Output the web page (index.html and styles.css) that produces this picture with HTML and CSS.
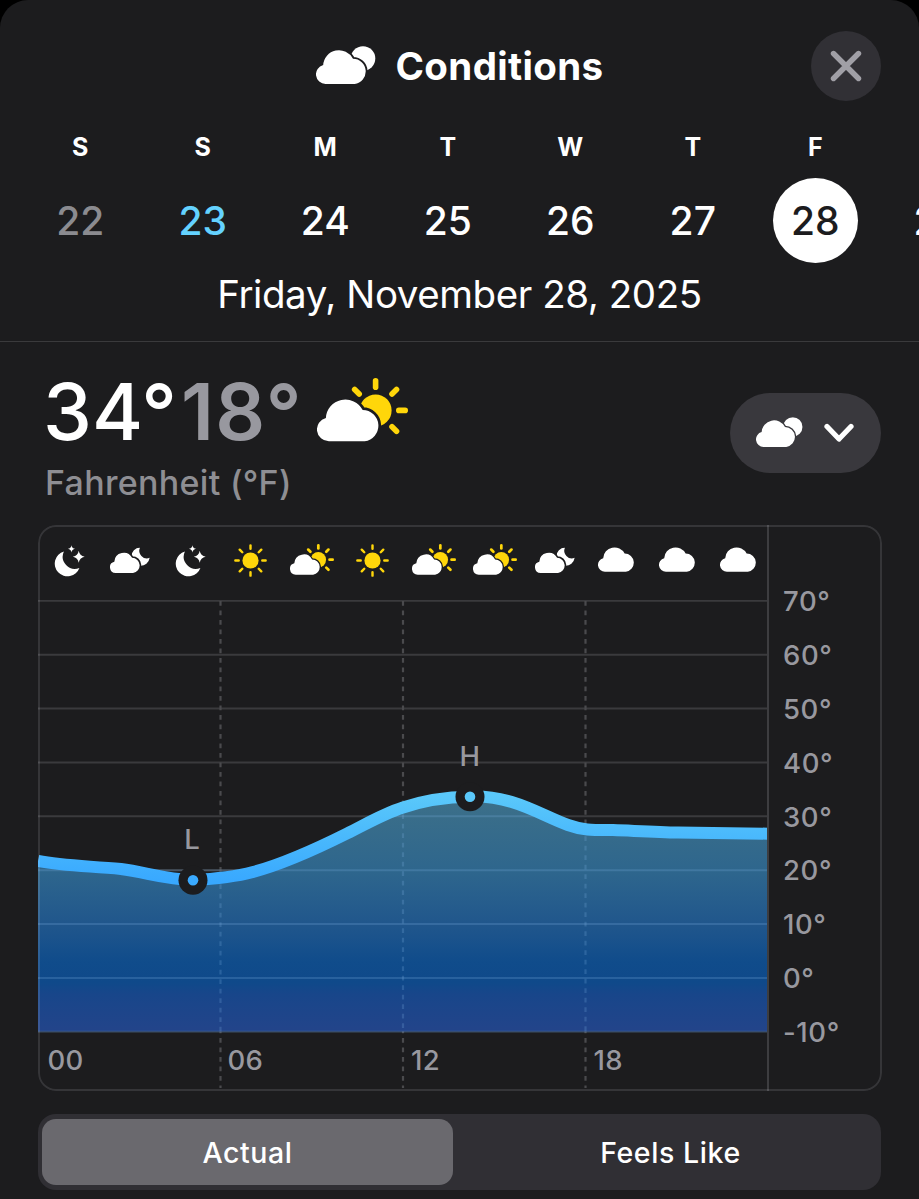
FILE: index.html
```html
<!DOCTYPE html>
<html lang="en">
<head>
  <meta charset="UTF-8">
  <meta name="viewport" content="width=device-width, initial-scale=1.0">
  <title>Conditions</title>
  <link rel="stylesheet" href="styles.css">
</head>
<body>
  <!-- Icon set -->
  <svg class="icon-defs" width="0" height="0" aria-hidden="true">
    <defs>
      <path id="cloud-shape" d="M9.6 34 A9.6 9.6 0 0 1 7.2 15.1 A15.8 15.8 0 0 1 37 8.7 A12.7 12.7 0 0 1 38.6 34 Z"/>
      <mask id="cut-overcast" maskUnits="userSpaceOnUse" x="0" y="0" width="60" height="38">
        <rect width="60" height="38" fill="#fff"/>
        <use href="#cloud-shape" y="4" fill="#000" stroke="#000" stroke-width="3.6"/>
      </mask>
      <mask id="cut-sun" maskUnits="userSpaceOnUse" x="0" y="0" width="92" height="64">
        <rect width="92" height="64" fill="#fff"/>
        <use href="#cloud-shape" transform="translate(0 21.3) scale(1.235)" fill="#000" stroke="#000" stroke-width="4.4"/>
      </mask>
      <mask id="cut-moon" maskUnits="userSpaceOnUse" x="0" y="0" width="121" height="80">
        <rect width="121" height="80" fill="#fff"/>
        <use href="#cloud-shape" transform="translate(0 15.5) scale(1.8)" fill="#000" stroke="#000" stroke-width="4.6"/>
      </mask>
      <path id="ray" d="M0 -23.2V-29.6" stroke="#ffd60a" stroke-width="5.6" stroke-linecap="round"/>
    </defs>
    <symbol id="overcast" viewBox="0 0 60 38">
      <circle cx="47" cy="12.5" r="12.3" fill="#fff" mask="url(#cut-overcast)"/>
      <use href="#cloud-shape" y="4" fill="#fff"/>
    </symbol>
    <symbol id="cloud" viewBox="0 0 51.4 34">
      <use href="#cloud-shape" fill="#fff"/>
    </symbol>
    <symbol id="partly" viewBox="0 0 91 64">
      <g mask="url(#cut-sun)">
        <circle cx="58.6" cy="32.4" r="16" fill="#ffd60a"/>
      </g>
      <g transform="translate(58.6 32.4)">
        <use href="#ray" transform="rotate(-45)"/>
        <use href="#ray"/>
        <use href="#ray" transform="rotate(45)"/>
        <use href="#ray" transform="rotate(90)"/>
        <use href="#ray" transform="rotate(135)"/>
      </g>
      <use href="#cloud-shape" transform="translate(0 21.3) scale(1.235)" fill="#fff"/>
    </symbol>
    <symbol id="sun" viewBox="-49 -49 98 98">
      <circle r="24" fill="#ffd60a"/>
      <path d="M0 -35V-45M0 35V45M-35 0H-45M35 0H45M-24.5 -24.5L-32 -32M24.5 -24.5L32 -32M-24.5 24.5L-32 32M24.5 24.5L32 32" stroke="#ffd60a" stroke-width="7.2" stroke-linecap="round"/>
    </symbol>
    <symbol id="moon" viewBox="73 88 94 96">
      <path d="M103 107 A38.5 38.5 0 1 0 150 157 A37 37 0 0 1 103 107 Z" fill="#fff"/>
      <path d="M126 88 Q127.5 97.5 137 99 Q127.5 100.5 126 110 Q124.5 100.5 115 99 Q124.5 97.5 126 88Z" fill="#fff"/>
      <path d="M148 105 Q150.5 120.5 166 123 Q150.5 125.5 148 141 Q145.5 125.5 130 123 Q145.5 120.5 148 105Z" fill="#fff"/>
    </symbol>
    <symbol id="cloud-moon" viewBox="0 0 120 80">
      <path d="M90 1 A27.5 27.5 0 1 0 119 32 A23 23 0 0 1 90 1 Z" fill="#fff" mask="url(#cut-moon)"/>
      <use href="#cloud-shape" transform="translate(0 16.5) scale(1.79)" fill="#fff"/>
    </symbol>
  </svg>

  <div class="sheet">
    <header class="header">
      <svg class="header-icon"><use href="#overcast"/></svg>
      <h1>Conditions</h1>
      <button class="close" type="button" aria-label="Close">
        <svg viewBox="0 0 32 32"><path d="M3.5 3.5L28.5 28.5M28.5 3.5L3.5 28.5"/></svg>
      </button>
    </header>

    <!-- Day picker -->
    <div class="days">
      <div class="day past"><span>S</span><b>22</b></div>
      <div class="day today"><span>S</span><b>23</b></div>
      <div class="day"><span>M</span><b>24</b></div>
      <div class="day"><span>T</span><b>25</b></div>
      <div class="day"><span>W</span><b>26</b></div>
      <div class="day"><span>T</span><b>27</b></div>
      <div class="day selected"><span>F</span><b>28</b></div>
      <div class="day"><span></span><b>29</b></div>
    </div>
    <p class="date">Friday, November 28, 2025</p>

    <!-- Summary -->
    <section class="summary">
      <div>
        <div class="temps">
          <span class="high">34°</span><span class="low">18°</span>
          <svg class="temps-icon"><use href="#partly"/></svg>
        </div>
        <p class="unit">Fahrenheit (°F)</p>
      </div>
      <button class="picker" type="button" aria-label="Choose condition">
        <svg class="picker-icon"><use href="#overcast"/></svg>
        <svg class="chevron" viewBox="0 0 30 20"><path d="M3 3.5L15 16L27 3.5"/></svg>
      </button>
    </section>

    <!-- Hourly chart -->
    <section class="chart">
      <div class="plot">
        <div class="hours">
          <svg class="i-moon"><use href="#moon"/></svg>
          <svg class="i-cloud-moon"><use href="#cloud-moon"/></svg>
          <svg class="i-moon"><use href="#moon"/></svg>
          <svg class="i-sun"><use href="#sun"/></svg>
          <svg class="i-partly"><use href="#partly"/></svg>
          <svg class="i-sun"><use href="#sun"/></svg>
          <svg class="i-partly"><use href="#partly"/></svg>
          <svg class="i-partly"><use href="#partly"/></svg>
          <svg class="i-cloud-moon"><use href="#cloud-moon"/></svg>
          <svg class="i-cloud"><use href="#cloud"/></svg>
          <svg class="i-cloud"><use href="#cloud"/></svg>
          <svg class="i-cloud"><use href="#cloud"/></svg>
        </div>
        <svg class="graph" viewBox="0 0 730 491">
          <defs>
            <linearGradient id="fill" gradientUnits="userSpaceOnUse" x1="0" y1="196" x2="0" y2="432">
              <stop offset="0" stop-color="#3d7089"/>
              <stop offset=".32" stop-color="#2e668d"/>
              <stop offset=".55" stop-color="#20568c"/>
              <stop offset=".7" stop-color="#104c8b"/>
              <stop offset=".79" stop-color="#0f498a"/>
              <stop offset=".84" stop-color="#18468a"/>
              <stop offset="1" stop-color="#23448a"/>
            </linearGradient>
            <linearGradient id="line" gradientUnits="userSpaceOnUse" x1="0" y1="196" x2="0" y2="282">
              <stop offset="0" stop-color="#5ac8fa"/>
              <stop offset="1" stop-color="#38a8ff"/>
            </linearGradient>
          </defs>
          <path class="grid" d="M0 .8H730M0 54.7H730M0 108.6H730M0 162.5H730M0 216.3H730M0 270.2H730"/>
          <path class="grid dashed" d="M182.5 1V488M365 1V488M547.5 1V488"/>
          <path fill="url(#fill)" d="M0 261 C25 266 52 266 83 269 C107 272 128 279.5 155 280 C185 278.5 200 276 215 272 C245 264 280 248 309 233.5 C330 223 345 214 365 207.5 C384 201 408 197 432 196.7 C475 195 502 215 530 225 C545 230.5 556 230 575 230 C600 231 620 232 640 232.5 L730 233.7 V431.5 H0 Z"/>
          <!-- softer grid over the filled area -->
          <path class="grid inner" d="M348 216.3H505M0 270.2H730M0 324H730M0 378H730M0 431.7H730"/>
          <path class="grid inner dashed" stroke-dashoffset="2.3" d="M182.5 277V431M365 207V431M547.5 229V431"/>
          <path class="curve" d="M0 261 C25 266 52 266 83 269 C107 272 128 279.5 155 280 C185 278.5 200 276 215 272 C245 264 280 248 309 233.5 C330 223 345 214 365 207.5 C384 201 408 197 432 196.7 C475 195 502 215 530 225 C545 230.5 556 230 575 230 C600 231 620 232 640 232.5 L730 233.7"/>
          <circle cx="155" cy="280.2" r="14.5" fill="#1c1c1e"/>
          <circle cx="155" cy="280.2" r="5.3" fill="#3aaaff"/>
          <circle cx="432" cy="196.7" r="14.5" fill="#1c1c1e"/>
          <circle cx="432" cy="196.7" r="5.3" fill="#5ac8fa"/>
          <text class="mark" x="154.3" y="248.5">L</text>
          <text class="mark" x="432" y="165.5">H</text>
          <text x="9.5" y="470">00</text>
          <text x="189.5" y="470">06</text>
          <text x="373" y="470">12</text>
          <text x="555.5" y="470">18</text>
        </svg>
      </div>
      <div class="scale">
        <span>70°</span>
        <span>60°</span>
        <span>50°</span>
        <span>40°</span>
        <span>30°</span>
        <span>20°</span>
        <span>10°</span>
        <span>0°</span>
        <span>-10°</span>
      </div>
    </section>

    <div class="segmented">
      <button class="active" type="button">Actual</button>
      <button type="button">Feels Like</button>
    </div>
  </div>
</body>
</html>
```
FILE: styles.css
```css
* {
  box-sizing: border-box;
}
body {
  margin: 0;
  background: #000;
  color: #fff;
  font-family: Inter, "Liberation Sans", sans-serif;
  overflow: hidden;
}
button {
  border: none;
  padding: 0;
  color: inherit;
  font-family: inherit;
}
svg {
  display: block;
}
.icon-defs {
  position: absolute;
}
.sheet {
  height: 1199px;
  background: #1c1c1e;
  border-radius: 28px 28px 0 0;
  overflow: hidden;
}

/* Header */
.header {
  position: relative;
  display: flex;
  justify-content: center;
  align-items: center;
  height: 132px;
}
.header-icon {
  width: 60px;
  height: 38px;
  margin: -2px 20px 0 0;
}
.header h1 {
  margin: 0;
  font-size: 38.5px;
  font-weight: 700;
  letter-spacing: 0.35px;
}
.close {
  position: absolute;
  top: 31px;
  right: 38px;
  display: flex;
  justify-content: center;
  align-items: center;
  width: 70px;
  height: 70px;
  border-radius: 50%;
  background: #313035;
}
.close svg {
  width: 32px;
  height: 32px;
  stroke: #a09fa6;
  stroke-width: 5.4;
  stroke-linecap: round;
}

/* Day picker */
.days {
  display: flex;
  padding-left: 19px;
}
.day {
  flex: 0 0 122.5px;
  display: flex;
  flex-direction: column;
  align-items: center;
}
.day span {
  height: 46px;
  line-height: 31px;
  font-size: 25px;
  font-weight: 700;
}
.day b {
  width: 85px;
  height: 85px;
  border-radius: 50%;
  line-height: 86px;
  text-align: center;
  font-size: 39px;
  font-weight: 450;
}
.past b {
  color: #8b8b90;
}
.today b {
  color: #64d2ff;
}
.selected b {
  background: #fff;
  color: #1c1c1e;
}
.date {
  margin: 0;
  height: 79px;
  line-height: 63px;
  border-bottom: 1px solid #3a3a3c;
  text-align: center;
  font-size: 38.5px;
  letter-spacing: -0.43px;
}

/* Summary */
.summary {
  display: flex;
  justify-content: space-between;
  height: 183px;
  padding: 36px 38px 0 43px;
}
.temps {
  display: flex;
  width: 365px;
  height: 72px;
  line-height: 67px;
  font-size: 78px;
  font-weight: 500;
}
.high {
  width: 138px;
}
.low {
  font-weight: 600;
  letter-spacing: 1.3px;
  color: #98989f;
}
.temps-icon {
  width: 91px;
  height: 64px;
  margin-left: auto;
}
.unit {
  margin: 12px 0 0 2px;
  line-height: 42px;
  font-size: 34px;
  font-weight: 500;
  letter-spacing: 0.3px;
  color: #8e8e93;
}
.picker {
  display: flex;
  align-items: center;
  justify-content: space-between;
  width: 151px;
  height: 80px;
  margin-top: 15px;
  padding: 0 27px 0 26px;
  border-radius: 40px;
  background: #39383d;
}
.picker-icon {
  width: 47px;
  height: 30px;
  margin-top: -2px;
}
.chevron {
  width: 30px;
  height: 20px;
  fill: none;
  stroke: #fff;
  stroke-width: 5.2;
  stroke-linecap: round;
  stroke-linejoin: round;
}

/* Chart */
.chart {
  position: relative;
  display: grid;
  grid-template-columns: 730px 1fr;
  height: 566px;
  margin: 0 37px 0 38px;
  border-radius: 18px;
  overflow: hidden;
}
.chart::after {
  content: "";
  position: absolute;
  inset: 0;
  border: 2px solid rgba(235, 235, 245, 0.12);
  border-radius: 18px;
  pointer-events: none;
}
.hours {
  display: grid;
  grid-template-columns: repeat(12, 1fr);
  align-items: center;
  justify-items: center;
  height: 75px;
  padding-left: 1px;
}
.i-moon {
  width: 31px;
  height: 32px;
  margin-top: -4px;
}
.i-cloud-moon {
  width: 40px;
  height: 27px;
  margin-top: -5px;
}
.i-sun {
  width: 33px;
  height: 33px;
  margin: -4px 0 0 -2px;
}
.i-partly {
  width: 44px;
  height: 31px;
  margin-top: -6px;
}
.i-cloud {
  width: 37px;
  height: 25px;
  margin: -6px 0 0 1px;
}
.graph {
  width: 730px;
  height: 491px;
}
.graph text {
  fill: #98989f;
  font-size: 27.5px;
  font-weight: 500;
  letter-spacing: 0.3px;
}
.graph .mark {
  text-anchor: middle;
}
.grid {
  fill: none;
  stroke: #3a3a3d;
  stroke-width: 2;
}
.dashed {
  stroke: #4a4a4d;
  stroke-width: 2.2;
  stroke-dasharray: 4.7 4.8;
}
.inner {
  stroke: rgba(130, 180, 230, 0.22);
}
.curve {
  fill: none;
  stroke: url(#line);
  stroke-width: 12;
}
.scale {
  display: flex;
  flex-direction: column;
  margin-left: -1px;
  padding: 49px 0 0 14px;
  border-left: 2px solid #3d3d40;
}
.scale span {
  height: 53.9px;
  line-height: 54px;
  font-size: 27.5px;
  font-weight: 500;
  letter-spacing: 0.6px;
  color: #98989f;
}

/* Actual / Feels Like */
.segmented {
  display: flex;
  height: 76px;
  margin: 23px 38px 0;
  padding: 5px 4px;
  border-radius: 18px;
  background: #302f34;
}
.segmented button {
  flex: 1 1 0;
  padding-left: 11px;
  border-radius: 14px;
  background: none;
  font-size: 28.5px;
  font-weight: 500;
  letter-spacing: 0.6px;
}
.segmented .active {
  flex: 0 0 411px;
  padding-left: 0;
  background: #6a696e;
}
```
